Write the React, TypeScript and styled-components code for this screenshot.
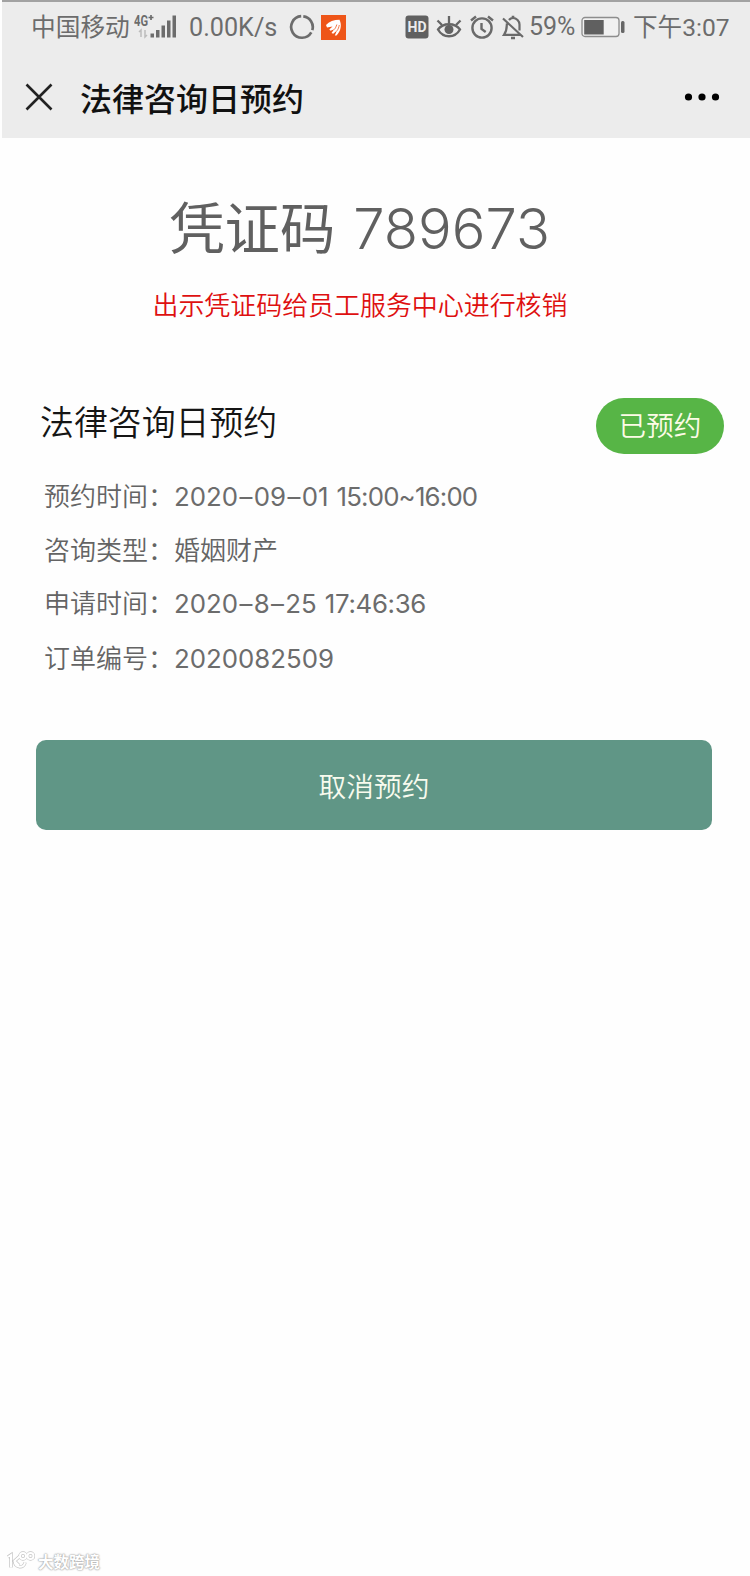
import styled, { createGlobalStyle, css } from "styled-components";

const GlobalStyle = createGlobalStyle`
  * {
    box-sizing: border-box;
  }
  body {
    margin: 0;
    background: #fefefe;
    font-family: Inter, "Noto Sans CJK SC", sans-serif;
  }
`;

const Page = styled.div`
  width: 750px;
  height: 1576px;
  display: flex;
  flex-direction: column;
  overflow: hidden;
`;

const Top = styled.header`
  height: 138px;
  margin-left: 2px;
  border-top: 2px solid #a2a2a2;
  background: #ececec;
  flex-shrink: 0;
`;

const StatusBar = styled.div`
  height: 50px;
  display: flex;
  align-items: center;
  padding: 0 19px 0 29px;
  color: #6c6c6c;
  font-family: Roboto, "Noto Sans CJK SC", sans-serif;
  white-space: nowrap;
`;

const StatusText = styled.span<{ $width: number; $size?: number; $gap?: number; $drop?: number }>`
  width: ${(props) => props.$width}px;
  margin-left: ${(props) => props.$gap || 0}px;
  padding-top: ${(props) => props.$drop || 0}px;
  font-size: ${(props) => props.$size || 25}px;
  line-height: 50px;
  flex-shrink: 0;
`;

const StatusIcon = styled.svg<{ $gap?: number }>`
  display: block;
  flex-shrink: 0;
  margin-left: ${(props) => props.$gap || 0}px;
`;

const StatusGroup = styled.div<{ $right?: boolean }>`
  display: flex;
  align-items: center;
  height: 50px;
  ${(props) =>
    props.$right &&
    css`
      margin-left: auto;
    `}
`;

const NavBar = styled.nav`
  height: 86px;
  display: flex;
  align-items: center;
  padding: 4px 30px 0 23px;

  svg {
    display: block;
  }
`;

const NavTitle = styled.h1`
  flex: 1;
  margin: 0 0 0 27px;
  padding-top: 5px;
  font-size: 32px;
  line-height: 46px;
  font-weight: 500;
  color: #111;
`;

const Voucher = styled.section`
  width: 716px;
  padding-top: 51px;
  text-align: center;
`;

const VoucherCode = styled.div`
  display: flex;
  justify-content: center;
  height: 80px;
  margin-left: 3px;
  line-height: 80px;
  font-size: 55.4px;
  color: #606060;
`;

const CodeDigits = styled.span`
  margin-left: 18px;
  font-size: 56px;
  font-weight: 350;
  letter-spacing: 0;
`;

const Hint = styled.p`
  margin: 17px 0 0 4px;
  font-size: 25.95px;
  line-height: 40px;
  font-weight: 350;
  color: #de1010;
`;

const Booking = styled.section`
  padding: 72px 26px 0 40px;
`;

const BookingHead = styled.div`
  display: flex;
  justify-content: space-between;
  height: 56px;
`;

const BookingTitle = styled.h2`
  margin: 0;
  font-size: 33.9px;
  line-height: 50px;
  font-weight: 350;
  color: #151515;
`;

const Badge = styled.span`
  width: 128px;
  height: 56px;
  padding-top: 1px;
  border-radius: 28px;
  background: #57b546;
  color: #fcfbe6;
  font-size: 27.6px;
  line-height: 55px;
  font-weight: 350;
  text-align: center;
`;

const Details = styled.dl`
  display: grid;
  grid-template-columns: 130px 1fr;
  grid-template-rows: 54px 53px 54px 56px;
  margin: 16px 0 0 4px;
  font-size: 26px;
  font-weight: 350;
  color: #646464;
`;

const Label = styled.dt`
  align-self: center;
  line-height: 40px;
`;

const Value = styled.dd<{ $numeric?: boolean }>`
  margin: 0;
  align-self: center;
  line-height: 40px;
  ${(props) =>
    props.$numeric &&
    css`
      font-size: 25.8px;
      font-weight: 400;
      color: #6c6c6c;
    `}
`;

const Dash = styled.span`
  margin: 0 1.4px;
`;

const Time = styled.span<{ $spacing: number }>`
  margin-left: 8px;
  letter-spacing: ${(props) => props.$spacing}px;
`;

const CancelButton = styled.button`
  width: 676px;
  height: 90px;
  margin: 53px 0 0 36px;
  padding: 0;
  border: none;
  border-radius: 10px;
  background: #609686;
  color: #f8fbee;
  font-family: inherit;
  font-size: 27.7px;
  font-weight: 350;
  flex-shrink: 0;
`;

const Watermark = styled.footer`
  display: flex;
  align-items: center;
  gap: 3px;
  height: 24px;
  margin-top: auto;
  margin-bottom: 3px;
  padding-left: 7px;
  color: #fff;
  font-size: 15.5px;
  font-weight: 700;
  text-shadow: 0 0 1px #aaa, 0 0 2px #aaa, 0 0 2px #bbb;
`;

function SignalIcon() {
  return (
    <StatusIcon width="43" height="28" viewBox="0 0 43 28" fill="#6c6c6c">
      <text x="0" y="12.5" fontSize="14" fontWeight="700" fontFamily="Roboto" textLength="14" lengthAdjust="spacingAndGlyphs">
        4G
      </text>
      <path d="M14.5 4.5h5M17 2v5" stroke="#6c6c6c" strokeWidth="1.7" />
      <path d="M7 24v-7l-2 2M11 17v7l2-2" fill="none" stroke="#bcbcbc" strokeWidth="1.5" />
      <path d="M16.5 20.5h3.5v4h-3.5zM22 17h3.5v7.5h-3.5zM27.5 12.5h3.5v12h-3.5zM33 7.5h3.5v17h-3.5zM38.5 2.500h3.5v22h-3.5z" />
    </StatusIcon>
  );
}

function LoadingIcon() {
  return (
    <StatusIcon width="26" height="26" viewBox="0 0 26 26" fill="none" stroke="#6c6c6c" strokeWidth="2.7">
      <path d="M14.3 2.3A10.8 10.8 0 0 1 23.3 16.2M22.3 18.4A10.8 10.8 0 1 1 12.2 2.2" />
    </StatusIcon>
  );
}

function AppIcon() {
  return (
    <StatusIcon width="25" height="25" viewBox="0 0 25 25" $gap={6}>
      <path fill="#ee5518" d="M0 0h25v25H0z" />
      <path
        fill="#fff"
        d="M5 10C8 6.500 13 4.800 18.500 4.800C21 10 20 16 15.500 20.500L13.800 20.500L16 15.500L12.200 18.800L10.500 18L13.200 14.200L9.500 15.800L8.300 14.500L11.500 11.500L6 12.500Z"
      />
      <path d="M15.800 9.500C15 12 14.500 13 13.200 14.600M18.300 10C17.800 12.500 17.200 14 16 15.800" fill="none" stroke="#ee5518" strokeWidth=".8" />
    </StatusIcon>
  );
}

function HdIcon() {
  return (
    <StatusIcon width="24" height="24" viewBox="0 0 24 24">
      <rect x=".5" y=".5" width="23" height="23" rx="3" fill="#606060" />
      <text x="2.5" y="16.8" fontSize="14" fontWeight="700" fontFamily="Roboto" fill="#ececec" textLength="19" lengthAdjust="spacingAndGlyphs">
        HD
      </text>
    </StatusIcon>
  );
}

function EyeIcon() {
  return (
    <StatusIcon width="26" height="24" viewBox="0 0 26 24" fill="none" stroke="#666" strokeWidth="2.3" $gap={7}>
      <path d="M2 14.5C7 7.5 19 7.5 24 14.5C19 23.5 7 23.5 2 14.5Z" />
      <path d="M13 1v7M1.5 5.5l4.500 4.500M24.5 5.5l-4.500 4.500" />
      <circle cx="13" cy="14.5" r="4.5" fill="#626262" stroke="none" />
    </StatusIcon>
  );
}

function AlarmIcon() {
  return (
    <StatusIcon width="24" height="24" viewBox="0 0 24 24" fill="none" stroke="#6a6a6a" strokeWidth="2.4" $gap={8}>
      <circle cx="12" cy="13" r="9.6" />
      <path d="M11.5 8v6l4.2 3M1 5.5l5-4M23 5.5l-5-4" />
    </StatusIcon>
  );
}

function BellOffIcon() {
  return (
    <StatusIcon width="22" height="25" viewBox="0 0 22 25" fill="none" stroke="#6a6a6a" strokeWidth="2.2" $gap={8}>
      <path d="M1 3.5l20 18.5M7 5C8 3.7 9.5 3 11 3C14.5 3 17.5 6 17.5 9.5V15.5M4.8 8.5C5 13 4.5 16 2 19.8H18.5" />
      <path d="M11 3V.8M9 23h4" strokeWidth="2.6" />
    </StatusIcon>
  );
}

function BatteryIcon() {
  return (
    <StatusIcon width="44" height="22" viewBox="0 0 44 22">
      <rect x="1" y="1.5" width="37" height="19" rx="3" fill="#f1f1f1" stroke="#8d8d8d" strokeWidth="1.3" />
      <path fill="#606060" d="M3.2 4h19.500v14.500H3.200z" />
      <rect x="40" y="5" width="3.5" height="12" rx="1.5" fill="#666" />
    </StatusIcon>
  );
}

const logoPath = "M1 6L4 4V16.500M12.500 5.500L7.500 10L12 14.500M7.500 10C8 17 17 18 18 11.500";

function WatermarkLogo() {
  return (
    <svg width="28" height="20" viewBox="0 0 28 20" fill="none">
      <g stroke="#c4c4c4" strokeWidth="3.4">
        <path d={logoPath} />
        <circle cx="16" cy="5" r="3" />
        <circle cx="23.5" cy="5" r="3" />
      </g>
      <g stroke="#fff" strokeWidth="2">
        <path d={logoPath} />
        <circle cx="16" cy="5" r="3" />
        <circle cx="23.5" cy="5" r="3" />
      </g>
    </svg>
  );
}

function DateText({ parts }: { parts: string[] }) {
  return (
    <>
      {parts.map((part, i) => (
        <span key={i}>
          {i > 0 && <Dash>–</Dash>}
          {part}
        </span>
      ))}
    </>
  );
}

function App() {
  return (
    <Page>
      <GlobalStyle />
      <Top>
        <StatusBar>
          <StatusGroup>
            <StatusText $width={103} $size={24.7} $drop={2}>中国移动</StatusText>
            <SignalIcon />
            <StatusText $width={100} $size={25.2} $gap={12} $drop={1}>0.00K/s</StatusText>
            <LoadingIcon />
            <AppIcon />
          </StatusGroup>
          <StatusGroup $right>
            <HdIcon />
            <EyeIcon />
            <AlarmIcon />
            <BellOffIcon />
            <StatusText $width={52} $size={25} $gap={5}>59%</StatusText>
            <BatteryIcon />
            <StatusText $width={98} $size={24.6} $gap={8} $drop={1}>下午3:07</StatusText>
          </StatusGroup>
        </StatusBar>
        <NavBar>
          <svg width="28" height="28" viewBox="0 0 28 28" stroke="#222" strokeWidth="2.6">
            <path d="M1.5 1.5l25 25M26.5 1.5l-25 25" />
          </svg>
          <NavTitle>法律咨询日预约</NavTitle>
          <svg width="36" height="10" viewBox="0 0 36 10">
            <circle cx="4.5" cy="5" r="3.6" />
            <circle cx="18" cy="5" r="3.6" />
            <circle cx="31.5" cy="5" r="3.6" />
          </svg>
        </NavBar>
      </Top>
      <Voucher>
        <VoucherCode>
          凭证码
          <CodeDigits>789673</CodeDigits>
        </VoucherCode>
        <Hint>出示凭证码给员工服务中心进行核销</Hint>
      </Voucher>
      <Booking>
        <BookingHead>
          <BookingTitle>法律咨询日预约</BookingTitle>
          <Badge>已预约</Badge>
        </BookingHead>
        <Details>
          <Label>预约时间：</Label>
          <Value $numeric>
            <DateText parts={["2020", "09", "01"]} />
            <Time $spacing={-0.8}>15:00~16:00</Time>
          </Value>
          <Label>咨询类型：</Label>
          <Value>婚姻财产</Value>
          <Label>申请时间：</Label>
          <Value $numeric>
            <DateText parts={["2020", "8", "25"]} />
            <Time $spacing={-0.3}>17:46:36</Time>
          </Value>
          <Label>订单编号：</Label>
          <Value $numeric>2020082509</Value>
        </Details>
      </Booking>
      <CancelButton>取消预约</CancelButton>
      <Watermark>
        <WatermarkLogo />
        大数跨境
      </Watermark>
    </Page>
  );
}

export default App;
